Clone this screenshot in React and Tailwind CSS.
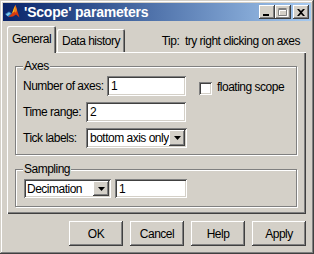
import React from "react";

const raised =
  "bg-[#d4d0c8] shadow-[inset_-1px_-1px_0_#404040,inset_1px_1px_0_#fff,inset_-2px_-2px_0_#808080]";
const sunken =
  "bg-white shadow-[inset_1px_1px_0_#808080,inset_-1px_-1px_0_#fff,inset_2px_2px_0_#404040,inset_-2px_-2px_0_#d4d0c8]";

function MatlabIcon() {
  return (
    <svg width="16" height="16" viewBox="0 0 16 16">
      <path d="M1 10 L5 7.5 L8 9.5 L4.5 13 Z" fill="#3a7fc0" />
      <path d="M2 10.5 L5 8.5 L6.5 9.5 L3.5 12 Z" fill="#7fd0f0" />
      <path d="M4.5 13 L8 9.5 L10 4 L11.5 1 L13 6 L15.5 13.5 L12 10.5 L9 12.5 Z" fill="#d83a10" />
      <path d="M8 9.5 L10 4 L11.5 1 L10.5 7.5 Z" fill="#f6c020" />
      <path d="M11.5 1 L13 6 L12 9 L10.5 7.5 Z" fill="#f08020" />
    </svg>
  );
}

function CaptionButton({ children, className = "" }) {
  return (
    <div className={`w-[16px] h-[14px] flex items-center justify-center ${raised} ${className}`}>
      {children}
    </div>
  );
}

function DropArrow({ h }) {
  return (
    <div className={`w-[16px] shrink-0 ${h} flex items-center justify-center ${raised}`}>
      <svg width="7" height="4" viewBox="0 0 7 4">
        <path d="M0 0 H7 L3.5 4 Z" fill="#000" />
      </svg>
    </div>
  );
}

function Group({ label, className = "", children, pb }) {
  return (
    <div
      className={`w-[282px] border border-[#808080] shadow-[inset_1px_1px_0_#fff,1px_1px_0_#fff] pl-[7px] ${pb} ${className}`}
    >
      <div className="-mt-[7px] h-[13px] leading-[13px]">
        <span className="inline-block bg-[#d4d0c8] px-[1px]">{label}</span>
      </div>
      <div className="pt-[3px]">{children}</div>
    </div>
  );
}

function Button({ children }) {
  return (
    <div className={`w-[54px] h-[25px] flex items-center justify-center ${raised}`}>
      {children}
    </div>
  );
}

export default function App() {
  return (
    <div className="w-[314px] h-[254px] bg-[#d4d0c8] p-[3px] text-black text-[12px] leading-[14px] tracking-[-0.5px] whitespace-nowrap font-['Liberation_Sans',Arial,sans-serif] shadow-[inset_-1px_-1px_0_#404040,inset_1px_1px_0_#d4d0c8,inset_-2px_-2px_0_#808080,inset_2px_2px_0_#fff] overflow-hidden">
      {/* title bar */}
      <div className="h-[18px] flex items-center pl-[1px] pr-[2px] bg-gradient-to-r from-[#0a246a] to-[#a6caf0]">
        <MatlabIcon />
        <span className="ml-[4px] text-white font-bold text-[14px] tracking-[-0.2px]">
          'Scope' parameters
        </span>
        <div className="ml-auto flex items-center">
          <CaptionButton className="items-end pb-[3px] justify-start pl-[4px]">
            <div className="w-[6px] h-[2px] bg-black" />
          </CaptionButton>
          <CaptionButton>
            <svg width="10" height="9" viewBox="0 0 10 9">
              <path d="M1.5 2.5 H9.5 V8.5 H1.5 Z M1.5 1.5 H9.5" fill="none" stroke="#fff" />
              <path d="M0.5 1.5 H8.5 V7.5 H0.5 Z M0.5 0.5 H8.5" fill="none" stroke="#808080" />
            </svg>
          </CaptionButton>
          <CaptionButton className="ml-[2px]">
            <svg width="8" height="7" viewBox="0 0 8 7">
              <path d="M0 0 L2 0 L4 2 L6 0 L8 0 L5 3.5 L8 7 L6 7 L4 5 L2 7 L0 7 L3 3.5 Z" fill="#000" />
            </svg>
          </CaptionButton>
        </div>
      </div>

      <div className="px-[4px] pt-[5px]">
        {/* tabs */}
        <div className="flex items-end h-[26px]">
          <div className="relative z-10 -mb-px h-[27px] w-[49px] bg-[#d4d0c8] rounded-tl-[2px] rounded-tr-[2px] shadow-[inset_1px_1px_0_#fff,inset_-1px_0_0_#404040,inset_-2px_0_0_#808080] flex items-center justify-center pb-[1px]">
            General
          </div>
          <div className="h-[23px] w-[68px] ml-[1px] rounded-tl-[2px] rounded-tr-[2px] shadow-[inset_1px_1px_0_#fff,inset_-1px_0_0_#404040,inset_-2px_0_0_#808080] flex items-center justify-center pt-[1px]">
            Data history
          </div>
          <span className="ml-auto mr-[7px] mb-[4px] whitespace-pre">Tip:  try right clicking on axes</span>
        </div>

        {/* panel */}
        <div className="w-[299px] h-[162px] pt-[14px] pl-[8px] shadow-[inset_1px_1px_0_#fff,inset_-1px_-1px_0_#404040,inset_-2px_-2px_0_#808080]">
          <Group label="Axes" pb="pb-[6px]">
            <div className="flex flex-col gap-[6px]">
              <div className="flex items-center h-[20px]">
                <span className="w-[84px] shrink-0">Number of axes:</span>
                <div className={`w-[79px] h-[20px] pl-[4px] flex items-center ${sunken}`}>1</div>
                <div className={`ml-[13px] mt-[4px] w-[13px] h-[13px] ${sunken}`} />
                <span className="ml-[5px] mt-[2px]">floating scope</span>
              </div>
              <div className="flex items-center h-[20px]">
                <span className="w-[63px] shrink-0">Time range:</span>
                <div className={`w-[100px] h-[20px] pl-[4px] flex items-center ${sunken}`}>2</div>
              </div>
              <div className="flex items-center h-[20px]">
                <span className="w-[63px] shrink-0">Tick labels:</span>
                <div className={`w-[101px] h-[20px] pl-[4px] pr-[2px] flex items-center ${sunken}`}>
                  <span className="flex-1 overflow-hidden">bottom axis only</span>
                  <DropArrow h="h-[16px]" />
                </div>
              </div>
            </div>
          </Group>

          <Group label="Sampling" pb="pb-[8px]" className="mt-[14px]">
            <div className="flex items-center">
              <div className={`ml-[1px] w-[87px] h-[19px] pl-[3px] pr-[2px] flex items-center ${sunken}`}>
                <span className="flex-1">Decimation</span>
                <DropArrow h="h-[15px]" />
              </div>
              <div className={`ml-[4px] w-[72px] h-[19px] pl-[4px] flex items-center ${sunken}`}>1</div>
            </div>
          </Group>
        </div>

        {/* buttons */}
        <div className="mt-[7px] flex justify-end gap-[7px] pr-[1px]">
          <Button>OK</Button>
          <Button>Cancel</Button>
          <Button>Help</Button>
          <Button>Apply</Button>
        </div>
      </div>
    </div>
  );
}
